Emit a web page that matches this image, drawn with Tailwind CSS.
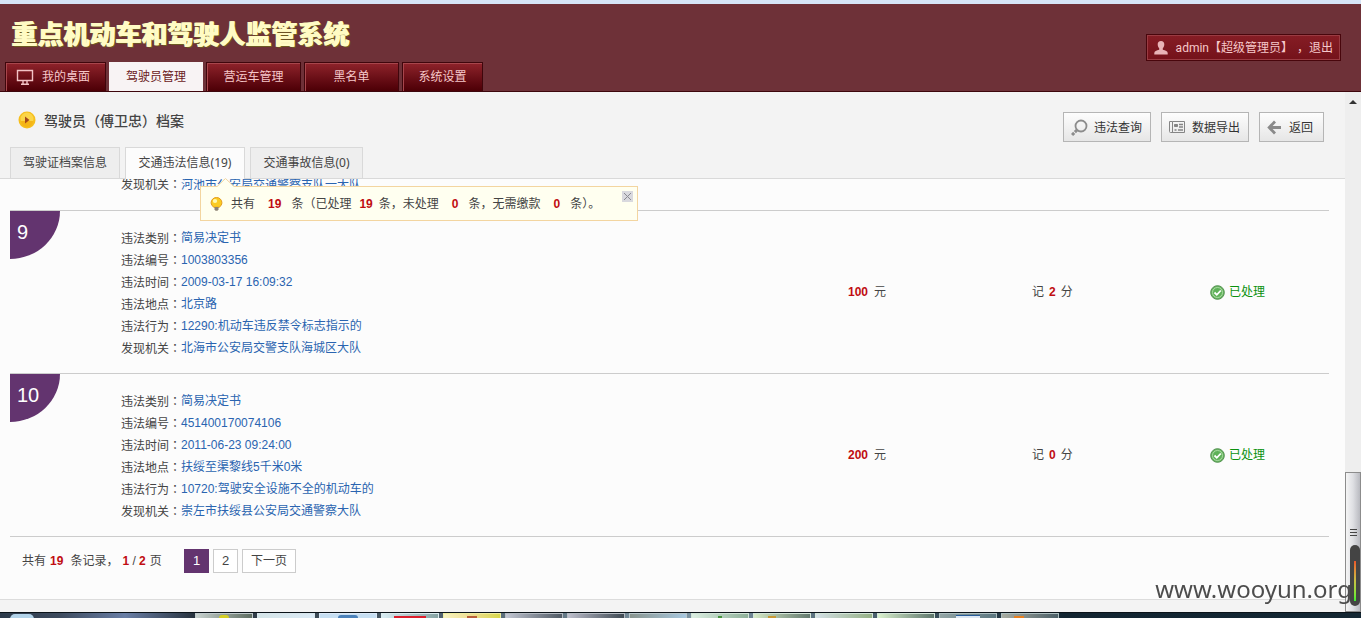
<!DOCTYPE html>
<html lang="zh-CN">
<head>
<meta charset="utf-8">
<title>重点机动车和驾驶人监管系统</title>
<script src="https://cdn.jsdelivr.net/npm/@tailwindcss/browser@4"></script>
</head>
<body class="flex h-screen flex-col overflow-hidden bg-[#f3f3f3] font-['Liberation_Sans','Noto_Sans_CJK_SC',sans-serif] text-xs text-[#444]">

<header class="flex justify-between border-t-4 border-b border-t-[#d6e4f6] border-b-[#3d060c] bg-[#6e3138]">
  <div class="pl-[5px]">
    <h1 class="flex h-[58px] items-center pl-[6px] font-['Noto_Sans_CJK_SC',sans-serif] text-[26px] leading-8 font-black whitespace-nowrap text-[#fffbc4] [text-shadow:1px_0_0_#fffbc4,2px_1px_0_#6b5a20]">重点机动车和驾驶人监管系统</h1>
    <nav class="flex h-[29px] gap-[3px] leading-[29px] text-[#f6c8ca]">
      <a href="#" class="flex w-[101px] items-center gap-2 border border-b-0 border-[#3f060c] bg-linear-to-b from-[#8f232b] to-[#4c0006] pl-[10px] shadow-[inset_1px_1px_0_#a8464c]">
        <svg class="h-[18px] w-[18px]" viewBox="0 0 18 18" fill="none" stroke="#f3c4c6" stroke-width="1.4"><path d="M1.5 2.5h15v10h-15z"/><path d="M7 13v3M11 13v3M5 16.3h8" /></svg>
        我的桌面</a>
      <a href="#" class="w-[94px] bg-[#f8f3f4] pt-px text-center text-[#6b1a22]">驾驶员管理</a>
      <a href="#" class="w-[95px] border border-b-0 border-[#3f060c] bg-linear-to-b from-[#8f232b] to-[#4c0006] text-center shadow-[inset_1px_1px_0_#a8464c]">营运车管理</a>
      <a href="#" class="w-[95px] border border-b-0 border-[#3f060c] bg-linear-to-b from-[#8f232b] to-[#4c0006] text-center shadow-[inset_1px_1px_0_#a8464c]">黑名单</a>
      <a href="#" class="w-[81px] border border-b-0 border-[#3f060c] bg-linear-to-b from-[#8f232b] to-[#4c0006] text-center shadow-[inset_1px_1px_0_#a8464c]">系统设置</a>
    </nav>
  </div>
  <div class="mt-[30px] mr-5 flex h-[27px] items-center border border-[#48060c] bg-linear-to-b from-[#861d25] to-[#74121a] px-[7px] font-['Roboto','Noto_Sans_CJK_SC',sans-serif] text-[#f6c8ca] shadow-[inset_0_0_0_1px_#9a3b42]">
    <svg class="mr-2 h-[14px] w-[14px]" viewBox="0 0 14 14" fill="#e9b3b6"><path d="M7 0c2.200 0 3.300 1.400 3.300 3.300 0 1.700-.6 3-1.500 3.900v1.600c2.600.6 4.900 1.400 4.900 3.200v1.500H.3V12c0-1.800 2.300-2.600 4.900-3.200V7.200C4.300 6.300 3.700 5 3.700 3.300 3.700 1.400 4.800 0 7 0z"/></svg>
    <span>admin【超级管理员】</span>
    <a href="#" class="ml-1">，退出</a>
  </div>
</header>

<div class="flex min-h-0 flex-1">
  <main class="flex min-w-0 flex-1 flex-col">
    <div class="flex justify-between border-b border-[#d9d9d9] pr-[21px] pl-[10px]">
      <div class="flex flex-col">
        <h2 class="flex h-[55px] items-center gap-2 pl-2 font-['Noto_Sans_CJK_SC',sans-serif] text-sm font-medium">
          <svg class="h-[18px] w-[18px]" viewBox="0 0 18 18"><circle cx="9" cy="9" r="8.500" fill="#f6be1c"/><circle cx="9" cy="8" r="6.500" fill="#fbd548"/><path d="M3 10h12a6 6 0 0 1-12 0z" fill="#f5b516"/><path d="M7 5.500v7L11.500 9z" fill="#a5481a"/></svg>
          驾驶员（傅卫忠）档案
        </h2>
        <nav class="relative -mb-px flex gap-[5px] font-['Noto_Sans','Noto_Sans_CJK_SC',sans-serif] leading-[30px] whitespace-nowrap">
          <a href="#" class="w-[110px] border border-[#d9d9d9] bg-[#eee] text-center">驾驶证档案信息</a>
          <a href="#" class="w-[120px] border border-b-0 border-[#d9d9d9] bg-[#fcfcfc] text-center">交通违法信息(19)</a>
          <a href="#" class="w-[113px] border border-[#d9d9d9] bg-[#eee] text-center">交通事故信息(0)</a>
          <!-- Summary tip hanging from the active tab -->
          <div class="absolute top-[39px] left-[190px] z-10 flex h-[35px] w-[438px] items-center border border-[#f3d5a0] bg-[#fffff0] pl-[9px]">
            <svg class="absolute -top-[9px] left-[15px] h-[10px] w-5" viewBox="0 0 20 10"><path d="M0 9.500 9.500.5 19 9.500" fill="#fffff0" stroke="#f3d5a0"/><path d="M0 9h20v1H0z" fill="#fffff0"/></svg>
            <svg class="mr-2 h-[14px] w-[13px]" viewBox="0 0 13 14"><path d="M6.500.5a5.300 5.300 0 0 1 5.400 5.200c0 2-1.200 3-2.500 4.600H3.700C2.400 8.700 1.100 7.700 1.100 5.700A5.300 5.300 0 0 1 6.500.5z" fill="#fbcb22" stroke="#e39b1c"/><ellipse cx="5" cy="4" rx="2.200" ry="2" fill="#fff8b0"/><path d="M4.500 10h4v2.500l-1 1.300h-2l-1-1.300z" fill="#8d8273"/></svg>
            <p>共有<b class="mr-[10px] ml-[13px] font-['Liberation_Sans'] text-[#c00d12]">19</b>条（已处理<b class="mr-[6px] ml-2 font-['Liberation_Sans'] text-[#c00d12]">19</b>条，未处理<b class="mr-[10px] ml-[13px] font-['Liberation_Sans'] text-[#c00d12]">0</b>条，无需缴款<b class="mr-[10px] ml-[13px] font-['Liberation_Sans'] text-[#c00d12]">0</b>条）。</p>
            <button type="button" aria-label="关闭" class="absolute top-1 right-1 h-[11px] w-[11px] bg-[#d9d9de]"><svg viewBox="0 0 11 11" stroke="#8a8a92"><path d="M2 2l7 7M9 2l-7 7"/></svg></button>
          </div>
        </nav>
      </div>
      <div class="mt-5 flex h-[30px] gap-[10px] font-['Noto_Sans_CJK_SC',sans-serif] text-[#333]">
        <button type="button" class="flex w-[88px] items-center gap-[6px] border border-[#b5b5b5] bg-linear-to-b from-[#fdfdfd] to-[#e6e6e6] pl-[7px]">
          <svg class="h-[17px] w-[17px]" viewBox="0 0 17 17" fill="none" stroke="#8c8c8c"><circle cx="10" cy="7" r="5.500" stroke-width="1.800"/><path d="M6 11 1 16" stroke-width="3" stroke-dasharray="3 1"/></svg>违法查询</button>
        <button type="button" class="flex w-[88px] items-center gap-[7px] border border-[#b5b5b5] bg-linear-to-b from-[#fdfdfd] to-[#e6e6e6] pl-[7px]">
          <svg class="h-4 w-4" viewBox="0 0 16 16" fill="none" stroke="#858585"><path d="M3.500 2.500h12v11H1.500a1 1 0 0 1-1-1v-10h3v11"/><path d="M5.500 5.500h3v2h-3z" fill="#858585"/><path d="M10 5.500h4M10 8h4M5.500 11h2M9 11h5" stroke-width="1.600"/></svg>数据导出</button>
        <button type="button" class="flex w-[65px] items-center gap-[7px] border border-[#b5b5b5] bg-linear-to-b from-[#fdfdfd] to-[#e6e6e6] pl-[7px]">
          <svg class="h-[15px] w-[15px]" viewBox="0 0 15 15" fill="none" stroke="#8a8a8a" stroke-width="2.800"><path d="M8 1.500 2.200 7.500 8 13.500M2.500 7.500H14"/></svg>返回</button>
      </div>
    </div>

    <div class="min-h-0 flex-1 overflow-hidden border-b border-[#dcdcdc] bg-[#fcfcfc] pr-4 pl-[10px]">
      <div class="flex h-[31px] items-end overflow-hidden pb-[14px] pl-[111px] leading-[22px]">
        <p>发现机关<span lang="zh-TW" class="font-['Noto_Sans_CJK_TC']">：</span><a href="#" class="text-[#2a64b0]">河池市公安局交通警察支队一大队</a></p>
      </div>

      <section class="grid grid-cols-[111px_1fr_184px_178px_119px] items-center border-t border-[#ccc]">
        <div class="h-12 w-[50px] self-start rounded-br-[100%] bg-[#63346f] pt-[6px] pl-[7px] text-xl leading-[30px] text-white">9</div>
        <dl class="grid auto-rows-[22px] grid-cols-[60px_1fr] pt-4 pb-[14px] leading-[22px] whitespace-nowrap [&_dd]:text-[#2a64b0]">
          <dt>违法类别<span lang="zh-TW" class="font-['Noto_Sans_CJK_TC']">：</span></dt><dd>简易决定书</dd>
          <dt>违法编号<span lang="zh-TW" class="font-['Noto_Sans_CJK_TC']">：</span></dt><dd>1003803356</dd>
          <dt>违法时间<span lang="zh-TW" class="font-['Noto_Sans_CJK_TC']">：</span></dt><dd>2009-03-17 16:09:32</dd>
          <dt>违法地点<span lang="zh-TW" class="font-['Noto_Sans_CJK_TC']">：</span></dt><dd>北京路</dd>
          <dt>违法行为<span lang="zh-TW" class="font-['Noto_Sans_CJK_TC']">：</span></dt><dd>12290:机动车违反禁令标志指示的</dd>
          <dt>发现机关<span lang="zh-TW" class="font-['Noto_Sans_CJK_TC']">：</span></dt><dd>北海市公安局交警支队海城区大队</dd>
        </dl>
        <p><b class="mr-[6px] text-[#c00d12]">100</b>元</p>
        <p>记<b class="mx-[5px] text-[#c00d12]">2</b>分</p>
        <p class="flex items-center gap-1 text-[#0b910f]"><svg class="h-[15px] w-[15px]" viewBox="0 0 15 15"><circle cx="7.500" cy="7.500" r="6.800" fill="#6db765" stroke="#4e8f4b"/><circle cx="7.500" cy="7.500" r="5" fill="#5fb159" stroke="#a9dba2"/><path d="M4.500 7.500l2.300 2.300 4-4.300" fill="none" stroke="#fff" stroke-width="1.800"/></svg>已处理</p>
      </section>

      <section class="grid grid-cols-[111px_1fr_184px_178px_119px] items-center border-t border-b border-[#ccc]">
        <div class="h-12 w-[50px] self-start rounded-br-[100%] bg-[#63346f] pt-[6px] pl-[7px] text-xl leading-[30px] text-white">10</div>
        <dl class="grid auto-rows-[22px] grid-cols-[60px_1fr] pt-4 pb-[14px] leading-[22px] whitespace-nowrap [&_dd]:text-[#2a64b0]">
          <dt>违法类别<span lang="zh-TW" class="font-['Noto_Sans_CJK_TC']">：</span></dt><dd>简易决定书</dd>
          <dt>违法编号<span lang="zh-TW" class="font-['Noto_Sans_CJK_TC']">：</span></dt><dd>451400170074106</dd>
          <dt>违法时间<span lang="zh-TW" class="font-['Noto_Sans_CJK_TC']">：</span></dt><dd>2011-06-23 09:24:00</dd>
          <dt>违法地点<span lang="zh-TW" class="font-['Noto_Sans_CJK_TC']">：</span></dt><dd>扶绥至渠黎线5千米0米</dd>
          <dt>违法行为<span lang="zh-TW" class="font-['Noto_Sans_CJK_TC']">：</span></dt><dd>10720:驾驶安全设施不全的机动车的</dd>
          <dt>发现机关<span lang="zh-TW" class="font-['Noto_Sans_CJK_TC']">：</span></dt><dd>崇左市扶绥县公安局交通警察大队</dd>
        </dl>
        <p><b class="mr-[6px] text-[#c00d12]">200</b>元</p>
        <p>记<b class="mx-[5px] text-[#c00d12]">0</b>分</p>
        <p class="flex items-center gap-1 text-[#0b910f]"><svg class="h-[15px] w-[15px]" viewBox="0 0 15 15"><circle cx="7.500" cy="7.500" r="6.800" fill="#6db765" stroke="#4e8f4b"/><circle cx="7.500" cy="7.500" r="5" fill="#5fb159" stroke="#a9dba2"/><path d="M4.500 7.500l2.300 2.300 4-4.300" fill="none" stroke="#fff" stroke-width="1.800"/></svg>已处理</p>
      </section>

      <div class="flex items-center pt-3 pl-3">
        <p class="w-[162px]">共有<b class="mr-[7px] ml-1 text-[#c00d12]">19</b>条记录，<b class="ml-1 text-[#c00d12]">1</b> / <b class="text-[#c00d12]">2</b><span class="ml-1">页</span></p>
        <nav class="flex gap-1 text-center text-[13px] leading-[22px]">
          <a href="#" class="w-[25px] border border-[#63346f] bg-[#63346f] text-white">1</a>
          <a href="#" class="w-[25px] border border-[#ccc] bg-white">2</a>
          <a href="#" class="w-[54px] border border-[#ccc] bg-white text-xs leading-[22px]">下一页</a>
        </nav>
      </div>
    </div>
    <div class="h-3 shrink-0 bg-[#f3f3f3]"></div>
  </main>

  <!-- Window scroll bar -->
  <aside class="flex w-4 flex-col justify-between bg-[#eee]">
    <svg class="mt-[7px] ml-1 h-[5px] w-2" viewBox="0 0 8 5"><path d="M0 5 4 1l4 4z" fill="#333"/></svg>
    <div class="relative flex h-[140px] flex-col items-center border border-[#8c8c8c] bg-linear-to-r from-[#f5f5f5] via-[#dedfe3] to-[#b9bac0]">
      <div class="mt-[56px] flex w-[7px] flex-col gap-[2px]"><i class="h-px bg-[#444]"></i><i class="h-px bg-[#444]"></i><i class="h-px bg-[#444]"></i></div>
    </div>
  </aside>
</div>

<!-- Desktop taskbar, top edge -->
<footer class="flex h-[6px] shrink-0 gap-1 overflow-hidden border-t border-[#0a1218] bg-[linear-gradient(90deg,#2c3a4a_0,#3d4b5e_60px,#6a7fa6_125px,#27323d_195px,#7d95a3_700px,#132632_1065px,#142733_1361px)]">
  <div class="w-[191px] pl-[10px]"><div class="mt-px h-[5px] w-6 rounded-t-full bg-[#b3d4ea]"></div></div>
  <div class="flex w-[58px] justify-center border border-b-0 border-[#bfc9cb] bg-linear-to-r from-[#c9d3d0] to-[#5f6e62]"><i class="mt-px w-[10px] rounded-t-full bg-[#d5cf25]"></i></div>
  <div class="w-[58px] border border-b-0 border-[#d8e6ec] bg-linear-to-r from-[#d5e5e8] to-[#dbeaf5]"></div>
  <div class="flex w-[58px] justify-center border border-b-0 border-[#dceaf8] bg-[#c7dff2]"><i class="mt-px w-5 rounded-t-full bg-[#4c82ba]"></i></div>
  <div class="flex w-[58px] justify-center border border-b-0 border-[#dcecee] bg-linear-to-r from-[#d9edf3] to-[#86a3a3]"><i class="mt-[2px] w-8 bg-[#dc1f2c]"></i></div>
  <div class="flex w-[58px] justify-center border border-b-0 border-[#f0eea0] bg-linear-to-r from-[#f8f3c0] via-[#eedd90] to-[#d8d84a]"><i class="mt-[2px] w-[10px] bg-[#b8603a]"></i></div>
  <div class="w-[58px] border border-b-0 border-[#b5bbc2] bg-linear-to-r from-[#c3c7d3] to-[#515b65]"></div>
  <div class="w-[58px] border border-b-0 border-[#b5bbc2] bg-linear-to-r from-[#bfc0cd] to-[#404b54]"></div>
  <div class="w-[58px] border border-b-0 border-[#b9c7cb] bg-linear-to-r from-[#89958f] to-[#a8c8df]"></div>
  <div class="flex w-[58px] justify-center border border-b-0 border-[#d3e5d8] bg-linear-to-r from-[#dcefe2] to-[#8fb19a]"><i class="mt-[2px] w-1 bg-[#46953d]"></i></div>
  <div class="flex w-[58px] border border-b-0 border-[#d3e5d8] bg-linear-to-r from-[#d6eac6] to-[#647a6f] pl-[14px]"><i class="mt-[2px] w-2 bg-[#c99a36]"></i></div>
  <div class="w-[58px] border border-b-0 border-[#d3e5d8] bg-linear-to-r from-[#d4e0e6] to-[#96b186]"></div>
  <div class="w-[58px] border border-b-0 border-[#d3e5d8] bg-linear-to-r from-[#dbf2ce] to-[#5f776d]"></div>
  <div class="flex w-[58px] justify-center border border-b-0 border-[#aebfc0] bg-linear-to-r from-[#93a5a5] to-[#5c7780]"><i class="mt-px w-6 border-t border-[#285d9c] bg-[#dce8f4]"></i></div>
  <div class="flex w-[58px] border border-b-0 border-[#aebfc0] bg-linear-to-r from-[#a9ada2] to-[#4c6068] pl-3"><i class="mt-[2px] w-[10px] bg-[#e8801f]"></i></div>
</footer>

<!-- Watermark and desktop meter float above the window -->
<div class="fixed right-[9px] bottom-3 z-20 font-['Noto_Sans',sans-serif] text-2xl leading-[34px] text-[#4d4d4d]">www.wooyun.org</div>
<div class="fixed right-px bottom-3 z-20 flex h-[61px] w-[10px] justify-center rounded-[5px] bg-[#444] pt-4 pb-[5px]"><div class="w-[2px] bg-linear-to-b from-[#e8552c] via-[#c5c044] to-[#2df02d]"></div></div>
</body>
</html>
